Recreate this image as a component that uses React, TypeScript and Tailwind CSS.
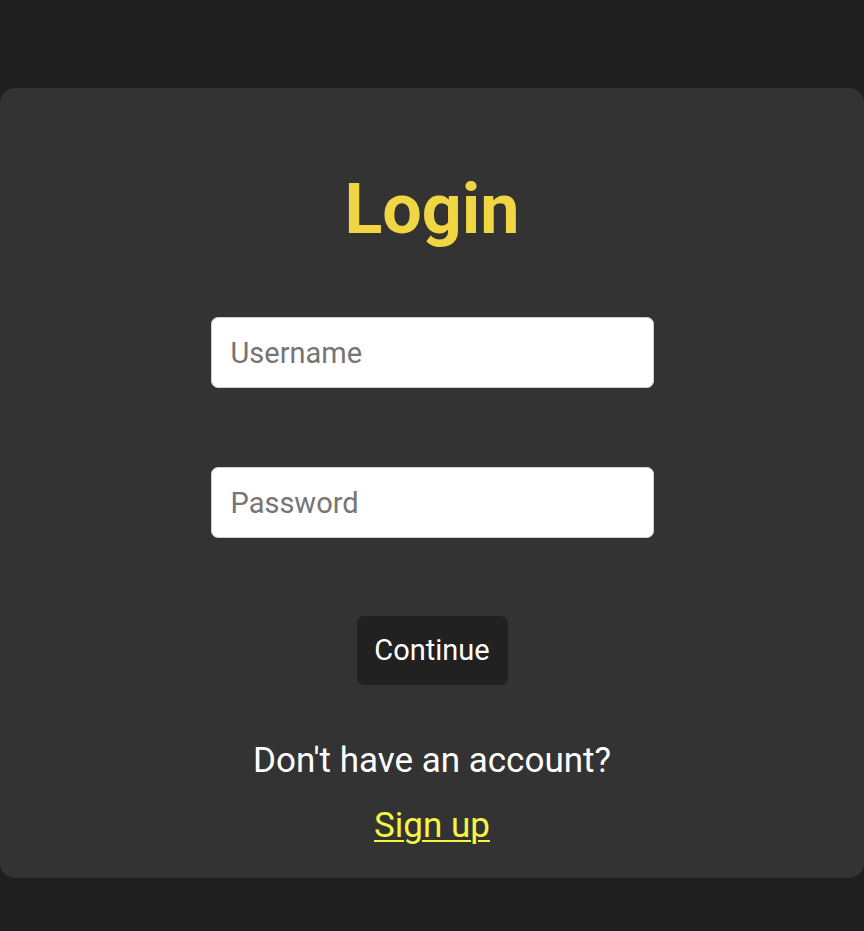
export default function App() {
  return (
    <div
      className="min-h-[931px] w-full bg-[#1f1f1f] pt-[88px]"
      style={{ fontFamily: "Roboto, 'Noto Sans', sans-serif" }}
    >
      <div className="flex h-[790px] w-full flex-col items-center rounded-[15px] bg-[#333333] pt-[86px]">
        <h1 className="shrink-0 text-[70px] font-bold leading-[70px] text-[#f1d644]">Login</h1>
        <input
          type="text"
          placeholder="Username"
          className="mt-[73px] h-[71px] w-[443px] shrink-0 rounded-[7px] border border-[#cfcfcf] bg-white px-[19px] text-[29px] text-[#333] outline-none placeholder:text-[#757575]"
        />
        <input
          type="password"
          placeholder="Password"
          className="mt-[79px] h-[71px] w-[443px] shrink-0 rounded-[7px] border border-[#cfcfcf] bg-white px-[19px] text-[29px] text-[#333] outline-none placeholder:text-[#757575]"
        />
        <button className="mt-[78px] h-[69px] w-[151px] shrink-0 rounded-[7px] bg-[#212121] text-[29px] text-white">
          Continue
        </button>
        <p className="mt-[56px] shrink-0 text-[35px] leading-[40px] text-white">Don't have an account?</p>
        <a
          href="#"
          className="mt-[25px] shrink-0 text-[35px] leading-[40px] text-[#f5f542] underline decoration-2 underline-offset-[3px]"
        >
          Sign up
        </a>
      </div>
    </div>
  );
}
